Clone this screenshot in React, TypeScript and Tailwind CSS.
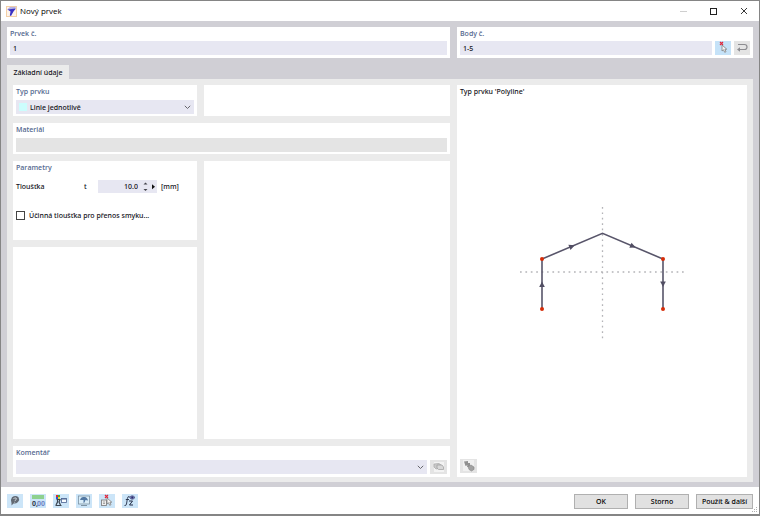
import React, { useState } from "react";

type BoxProps = { className?: string; children?: React.ReactNode };

function Box({ className = "", children }: BoxProps) {
  return <section className={`bg-white ${className}`}>{children}</section>;
}

const caption = "block h-[14px] pt-[2px] text-[7px] leading-[10px] font-['Open_Sans','Noto_Sans',sans-serif] font-semibold text-[#566a90]";
const field = "block h-[14px] min-w-0 bg-[#e7e7f2] px-[3px] pt-px text-[7px] leading-[13px] text-[#111118] outline-none";

function AppIcon() {
  return (
    <svg width="11" height="11" viewBox="0 0 11 11" aria-hidden="true">
      <rect x="0.5" y="0.5" width="10" height="10" fill="#fdf3ea" stroke="#f3cfa6" />
      <path d="M1 3.500 L4 1 L10 0.800 L8.500 4 Z" fill="#b4b2e4" />
      <path d="M1.500 3.500 L10 2.500 L7.500 5.500 L5 10 L3.800 9.500 L4.500 5.500 Z" fill="#3a31c4" />
    </svg>
  );
}

function Chevron() {
  return (
    <svg width="7" height="5" viewBox="0 0 7 5" className="pointer-events-none absolute right-[3px] top-[5px]" aria-hidden="true">
      <path d="M0.800 0.800 L3.500 3.500 L6.200 0.800" fill="none" stroke="#66666c" strokeWidth="1" />
    </svg>
  );
}

function Cursor({ x, y }: { x: number; y: number }) {
  return (
    <path
      transform={`translate(${x} ${y})`}
      d="M0 0 L0 6 L1.500 4.800 L2.700 7.300 L4 6.700 L2.900 4.300 L4.800 4.200 Z"
      fill="#f4f4f4"
      stroke="#808080"
      strokeWidth="0.8"
    />
  );
}

function RedCross({ x, y }: { x: number; y: number }) {
  return <path transform={`translate(${x} ${y})`} d="M0 0 L3 3 M3 0 L0 3" stroke="#e0283c" strokeWidth="1.200" />;
}

function IconButton({ label, className, children }: { label: string; className: string; children: React.ReactNode }) {
  return (
    <button type="button" aria-label={label} className={`flex shrink-0 items-center justify-center ${className}`}>
      <svg width="16" height="14" viewBox="0 0 16 14" aria-hidden="true">
        {children}
      </svg>
    </button>
  );
}

function TitleBar() {
  return (
    <header className="flex h-[20px] items-center bg-white pl-[5px] pr-[11px]">
      <AppIcon />
      <h1 className="ml-[3px] flex-1 font-['Open_Sans','Noto_Sans',sans-serif] text-[8px] leading-[12px] font-normal text-black">Nový prvek</h1>
      <div className="flex items-center gap-[23px]">
        <button type="button" aria-label="Minimalizovat" disabled>
          <svg width="7" height="7" viewBox="0 0 7 7" className="block"><path d="M0 3.500 H7" stroke="#cfcfcf" /></svg>
        </button>
        <button type="button" aria-label="Maximalizovat">
          <svg width="7" height="7" viewBox="0 0 7 7" className="block"><rect x="0.5" y="0.5" width="6" height="6" fill="none" stroke="#222" /></svg>
        </button>
        <button type="button" aria-label="Zavřít">
          <svg width="8" height="8" viewBox="0 0 8 8" className="block"><path d="M1 1 L7 7 M7 1 L1 7" stroke="#222" strokeWidth="0.9" /></svg>
        </button>
      </div>
    </header>
  );
}

function PolylinePreview() {
  return (
    <svg width="166" height="134" viewBox="0 0 166 134" role="img" aria-label="Polyline">
      <g stroke="#b4b4b8" strokeWidth="1.300" strokeDasharray="1.700 3.700">
        <path d="M1 66 H166" />
        <path d="M83.500 1 V133" />
      </g>
      <path d="M23 103 V53 L83.500 27.300 L144 53 V103" fill="none" stroke="#58556a" strokeWidth="1.600" />
      <g fill="#514e63">
        <path d="M23 75.500 L25.800 81 H20.200 Z" />
        <path d="M144 81 L146.800 75.500 H141.200 Z" />
        <path transform="translate(53 40.300) rotate(-23)" d="M3 0 L-2.800 -2.800 V2.800 Z" />
        <path transform="translate(114 40.300) rotate(23)" d="M3 0 L-2.800 -2.800 V2.800 Z" />
      </g>
      <g fill="#d62c08">
        <circle cx="23" cy="53" r="2" />
        <circle cx="23" cy="103" r="2" />
        <circle cx="144" cy="53" r="2" />
        <circle cx="144" cy="103" r="2" />
      </g>
    </svg>
  );
}

function TypeAndParameters() {
  const [thickness, setThickness] = useState("10.0");
  return (
    <>
      <div className="flex gap-[7px]">
        <Box className="h-[31px] w-[184px] shrink-0 px-[3px]">
          <label htmlFor="type" className={caption}>Typ prvku</label>
          <div className="relative mt-px">
            <select id="type" className="block h-[14px] w-full appearance-none bg-[#e7e7f2] pl-[14px] pt-px text-[7px] leading-[13px] text-[#111118] outline-none">
              <option>Linie jednotlivě</option>
            </select>
            <span className="pointer-events-none absolute left-[3px] top-[3px] size-[8px] bg-[#ccfdfd]" />
            <Chevron />
          </div>
        </Box>
        <Box className="flex-1" />
      </div>
      <Box className="h-[31px] px-[3px]">
        <label htmlFor="material" className={caption}>Materiál</label>
        <input id="material" disabled className="mt-px block h-[14px] w-full bg-[#e4e4e4] px-[3px] text-[7px]" />
      </Box>
      <div className="flex flex-1 gap-[7px]">
        <div className="flex w-[184px] shrink-0 flex-col gap-[7px]">
          <Box className="h-[79px] px-[3px] text-[7px] leading-[10px] text-[#111118]">
            <h2 className={caption}>Parametry</h2>
            <div className="mt-[5px] flex h-[13px] items-center">
              <label htmlFor="thickness" className="w-[68px] pt-px">Tloušťka</label>
              <span className="w-[14px] pt-px">t</span>
              <div className="flex h-[13px] w-[59px] items-center bg-[#e7e7f2]">
                <input
                  id="thickness"
                  value={thickness}
                  onChange={(e) => setThickness(e.target.value)}
                  className="h-[13px] w-[40px] bg-transparent text-right text-[7px] leading-[13px] outline-none"
                />
                <svg width="19" height="13" viewBox="0 0 19 13" aria-hidden="true">
                  <path d="M5.500 4.500 L7.500 2.500 L9.500 4.500 Z M5.500 9 L7.500 11 L9.500 9 Z" fill="#44444c" />
                  <path d="M14 4.300 L17 6.800 L14 9.300 Z" fill="#111" />
                </svg>
              </div>
              <span className="ml-[4px] pt-px">[mm]</span>
            </div>
            <label className="mt-[17px] flex h-[10px] items-center gap-[4px]">
              <input type="checkbox" className="size-[9px] appearance-none border border-[#444] bg-white checked:bg-[#566a90]" />
              <span className="pt-px">Účinná tloušťka pro přenos smyku...</span>
            </label>
          </Box>
          <Box className="flex-1" />
        </div>
        <Box className="flex-1" />
      </div>
      <Box className="h-[31px] px-[3px]">
        <label htmlFor="comment" className={caption}>Komentář</label>
        <div className="flex gap-[3px]">
          <div className="relative flex-1">
            <select id="comment" className="block h-[14px] w-full appearance-none bg-[#e7e7f2] text-[7px] outline-none">
              <option value=""></option>
            </select>
            <Chevron />
          </div>
          <IconButton label="Komentáře" className="h-[14px] w-[17px] bg-[#e4e4e4]">
            <rect x="3" y="2" width="10" height="10" fill="#f3f3f3" />
            <path d="M3 4 L8 3.500 L10 5 V8 L5 9 L3 7 Z" fill="#c9c9c9" stroke="#a8a8a8" strokeWidth="0.7" />
            <path d="M6 5 H11 L12.500 7 V9.500 H7.500 L6 8 Z" fill="#d8d8d8" stroke="#9c9c9c" strokeWidth="0.7" />
          </IconButton>
        </div>
      </Box>
    </>
  );
}

function Footer() {
  const tool = "h-[14px] w-[16px] bg-[#cce5f8]";
  const action = "h-[15px] border border-[#b0b0b0] bg-[#e1e1e1] pt-px text-center text-[7px] leading-[12px] text-black";
  return (
    <footer className="relative flex h-[27px] items-center bg-white px-[6px] pt-px">
      <div className="flex gap-[7px]">
        <IconButton label="Nápověda" className={tool}>
          <path d="M5 3.200 Q8.500 1 11.500 3.200 Q13 5.500 11 8 Q9 10 6.500 9.500 L4.500 11.500 L4.500 9 Q3 6 5 3.200 Z" fill="#626a74" />
          <path d="M6.500 5 Q7.300 3.300 9 4 Q10.200 5 8.500 6 L8 7 M7.700 7.800 V8.700" fill="none" stroke="#cfd7df" strokeWidth="0.9" />
        </IconButton>
        <IconButton label="Jednotky" className={tool}>
          <rect x="2" y="1" width="12" height="4" fill="#8ed18f" />
          <text x="2" y="11.500" fontSize="7" fontWeight="700" fill="#344050">0,</text>
          <text x="7" y="11.500" fontSize="7" fontWeight="700" fill="#7286c4">00</text>
        </IconButton>
        <IconButton label="Zobrazení" className={tool}>
          <path d="M3.500 5.500 H7 L6 8 L7.500 11 M4.500 6 V8 L3 11 M2.500 11.500 H8.500" fill="none" stroke="#3d4652" strokeWidth="1.200" />
          <rect x="3" y="1" width="2" height="2" fill="#e52828" />
          <rect x="5" y="1" width="2" height="2" fill="#39b53f" />
          <rect x="3" y="3" width="2" height="2" fill="#2855dd" />
          <rect x="5" y="3" width="2" height="2" fill="#f1d32b" />
          <rect x="8.500" y="4.500" width="5" height="4" fill="#f7fbff" stroke="#4b6391" strokeWidth="0.8" />
          <path d="M8.500 5 H13.500" stroke="#4b6391" />
        </IconButton>
        <IconButton label="Model" className={tool}>
          <rect x="2.500" y="2" width="11" height="8" fill="#d9edf9" stroke="#7d93a3" strokeWidth="0.8" />
          <path d="M4 6 Q5 2.500 8 3 Q11 2.500 12 6.500 L9.500 6 L8.500 8.500 L7.500 9 V6 Z" fill="#5278a3" />
          <path d="M5 11.500 H11" stroke="#7d93a3" />
        </IconButton>
        <IconButton label="Vybrat objekt" className={tool}>
          <RedCross x={6} y={1} />
          <rect x="2.500" y="6" width="5" height="5.500" fill="#eee" stroke="#777" strokeWidth="0.8" />
          <path d="M4 8 H6 M4 9.500 H6" stroke="#888" strokeWidth="0.7" />
          <Cursor x={8} y={4} />
        </IconButton>
        <IconButton label="Funkce" className={tool}>
          <path d="M7.500 2.500 Q5.800 2 5.400 4.500 L4.500 10 Q4 12 2.500 11.500 M3.800 5.500 H7" fill="none" stroke="#222d46" strokeWidth="0.9" />
          <path d="M7 7 H10.500 L7.500 11 H11" fill="none" stroke="#222d46" strokeWidth="1" />
          <path d="M7.500 3.500 Q10 0 13 3.500 Q10 7 7.500 3.500 Z" fill="#7779b5" stroke="#40477e" strokeWidth="0.7" />
          <circle cx="10.300" cy="3.500" r="1" fill="#292f68" />
        </IconButton>
      </div>
      <div className="ml-auto flex gap-[7px]">
        <button type="button" className={`w-[54px] ${action}`}>OK</button>
        <button type="button" className={`w-[54px] ${action}`}>Storno</button>
        <button type="button" className={`w-[57px] ${action}`}>Použít &amp; další</button>
      </div>
      <svg width="6" height="6" viewBox="0 0 6 6" className="absolute bottom-px right-px" aria-hidden="true">
        <path d="M4 0 H5 V1 H4 Z M2 2 H3 V3 H2 Z M4 2 H5 V3 H4 Z M0 4 H1 V5 H0 Z M2 4 H3 V5 H2 Z M4 4 H5 V5 H4 Z" fill="#b0b0b0" />
      </svg>
    </footer>
  );
}

export default function App() {
  return (
    <main
      className="flex min-h-screen flex-col border border-b-2 border-[#858585] bg-[#d0cfd5] font-['Noto_Sans','Open_Sans',sans-serif] font-medium"
      lang="cs"
    >
      <TitleBar />
      <div className="flex flex-1 flex-col px-[6px] pb-[5px] pt-[6px]">
        <div className="flex gap-[7px]">
          <Box className="h-[31px] flex-1 px-[3px]">
            <label htmlFor="number" className={caption}>Prvek č.</label>
            <input id="number" defaultValue="1" className={`w-full ${field}`} />
          </Box>
          <Box className="h-[31px] w-[296px] px-[3px]">
            <label htmlFor="nodes" className={caption}>Body č.</label>
            <div className="flex gap-[3px]">
              <input id="nodes" defaultValue="1-5" className={`flex-1 ${field}`} />
              <IconButton label="Vybrat body" className="h-[14px] w-[16px] bg-[#c5e2f8]">
                <RedCross x={5} y={1} />
                <Cursor x={7} y={4} />
              </IconButton>
              <IconButton label="Obrátit pořadí" className="h-[14px] w-[16px] bg-[#e4e4e4]">
                <path d="M4 3.500 H10.500 Q13 3.500 13 6 Q13 8.500 10.500 8.500 H4" fill="none" stroke="#8c8c90" strokeWidth="1.200" />
                <path d="M3 8.500 L6 6.300 V10.700 Z" fill="#8c8c90" />
              </IconButton>
            </div>
          </Box>
        </div>
        <div role="tablist" className="mt-[7px] flex">
          <button type="button" role="tab" aria-selected="true" className="h-[14px] w-[62px] bg-[#ebebeb] pt-[2px] text-center text-[7px] leading-[12px] text-[#111118]">
            Základní údaje
          </button>
        </div>
        <div role="tabpanel" className="flex flex-1 gap-[7px] bg-[#ebebeb] px-[6px] pb-[5px] pt-[6px]">
          <div className="flex flex-1 flex-col gap-[7px]">
            <TypeAndParameters />
          </div>
          <Box className="flex w-[290px] flex-col px-[3px] pb-[4px]">
            <h2 className="h-[14px] pt-[2px] text-[7px] leading-[10px] text-[#111118]">Typ prvku 'Polyline'</h2>
            <div className="flex flex-1 items-center justify-center pb-[12px]">
              <PolylinePreview />
            </div>
            <IconButton label="Nastavení náhledu" className="h-[14px] w-[17px] bg-[#e4e4e4]">
              <rect x="2" y="1" width="11" height="11" fill="#f0f0f0" />
              <path d="M3 2.500 L7 2 V6 L4.500 7 Z M7 4 H9 V8 H6 Z" fill="#909090" />
              <path d="M7 7.500 L10 6 L13 8 V10.500 L10.500 12 L8 10.500 Z" fill="#a2a2a2" stroke="#858585" strokeWidth="0.6" />
            </IconButton>
          </Box>
        </div>
      </div>
      <Footer />
    </main>
  );
}
